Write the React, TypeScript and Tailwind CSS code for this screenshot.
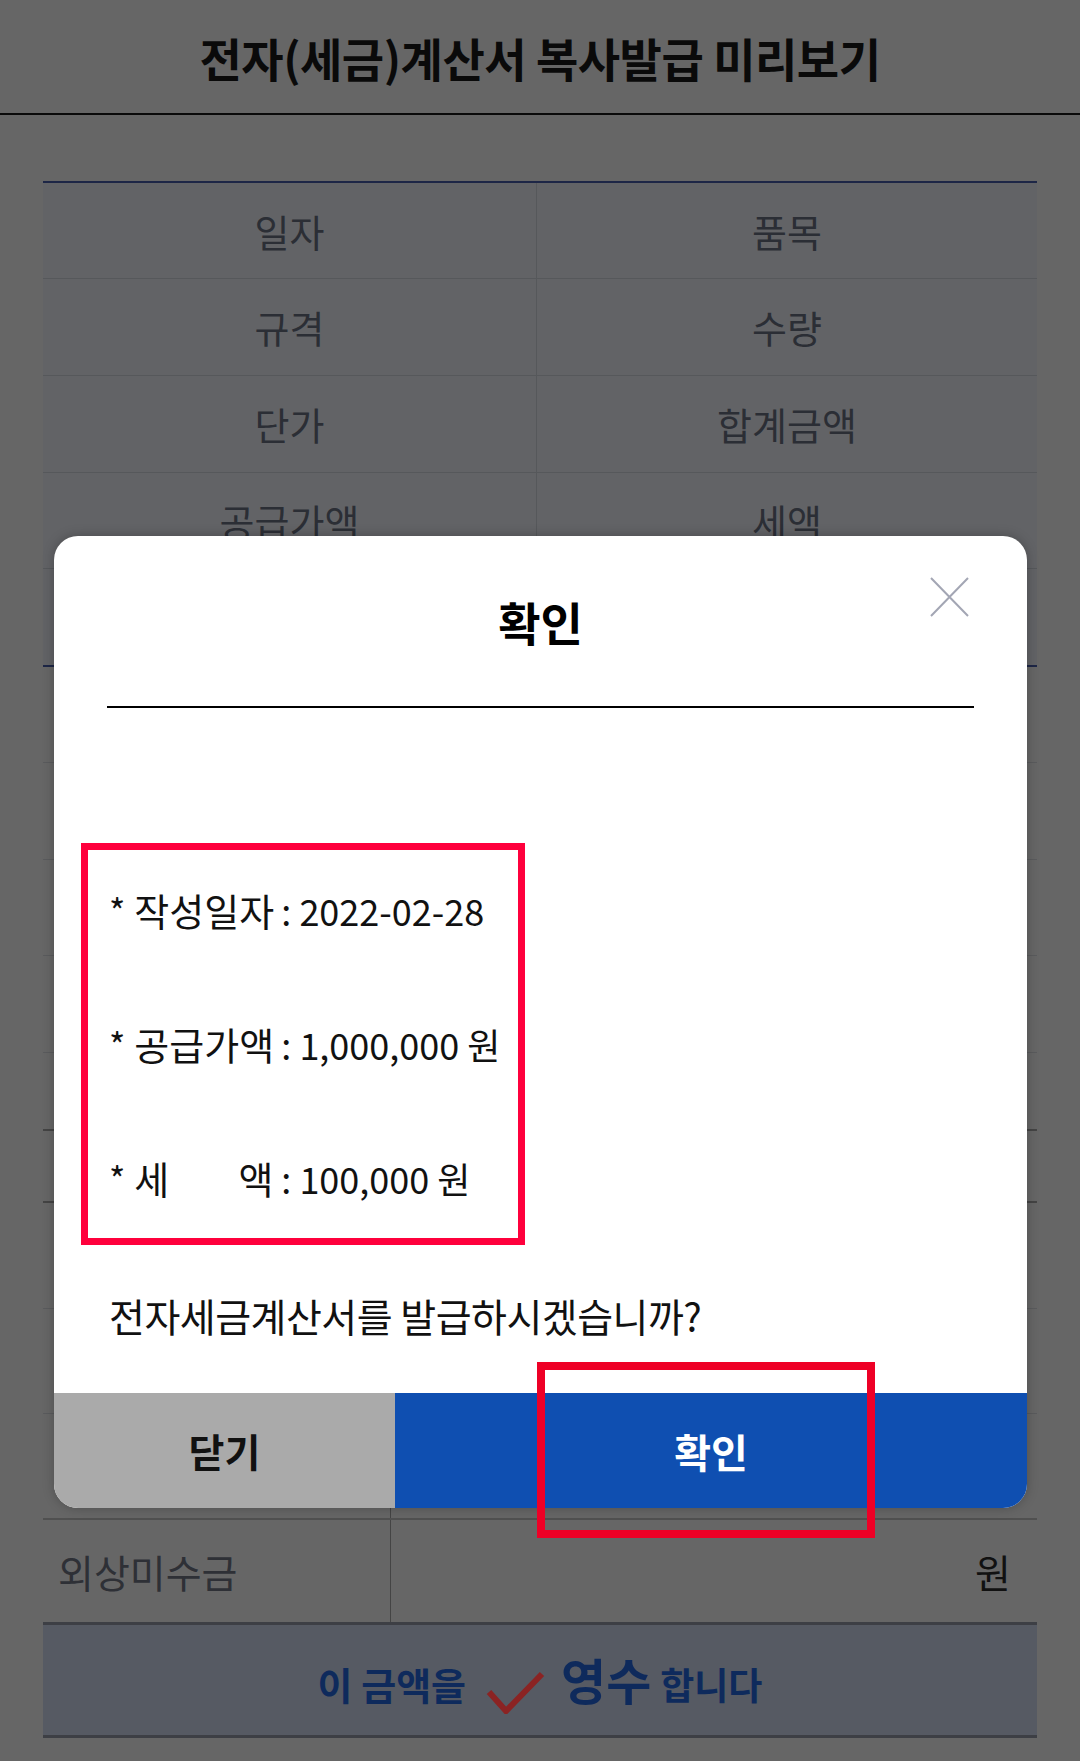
import React from "react";

const topRows: { l: string; r: string; h: string; last?: boolean }[] = [
  { l: "일자", r: "품목", h: "h-[96px]" },
  { l: "규격", r: "수량", h: "h-[97px]" },
  { l: "단가", r: "합계금액", h: "h-[97px]" },
  { l: "공급가액", r: "세액", h: "h-[96px]" },
  { l: "", r: "", h: "h-[98px]", last: true },
];

const lowerRows: { h: string; b: string }[] = [
  { h: "h-[96px]", b: "border-b border-[#5a5b5d]" },
  { h: "h-[97px]", b: "border-b border-[#5a5b5d]" },
  { h: "h-[96px]", b: "border-b border-[#5a5b5d]" },
  { h: "h-[97px]", b: "border-b border-[#5a5b5d]" },
  { h: "h-[78px]", b: "border-b-2 border-[#444444]" },
  { h: "h-[72px]", b: "border-b-2 border-[#444444]" },
  { h: "h-[106px]", b: "border-b border-[#5a5b5d]" },
  { h: "h-[105px]", b: "border-b border-[#5a5b5d]" },
  { h: "h-[106px]", b: "border-b-2 border-[#505050]" },
];

function InfoLine({ label, value }: { label: React.ReactNode; value: string }) {
  return (
    <div className="flex h-[40px] items-center whitespace-pre leading-[40px] text-[#111111]">
      <span className="text-[35px]">*</span>
      <span className="ml-[9px] inline-flex w-[139px] justify-between text-[38px]">{label}</span>
      <span className="ml-[8px] text-[36px]">:</span>
      <span className="ml-[8px] text-[36px]">{value}</span>
    </div>
  );
}

export default function App() {
  return (
    <div className="relative min-h-[1761px] w-[1080px] overflow-hidden bg-[#666666] font-['Noto_Sans_CJK_KR',sans-serif]">
      <header className="flex h-[115px] items-center justify-center border-b-2 border-[#0a0a0a]">
        <h1 className="text-[46px] font-bold leading-[50px] tracking-[-0.5px] text-[#0a0a0a]">
          전자(세금)계산서 복사발급 미리보기
        </h1>
      </header>

      <main className="mx-[43px] mt-[66px]">
        <div className="border-t-2 border-[#1d2646]">
          {topRows.map((row, i) => (
            <div
              key={i}
              className={`grid grid-cols-[494px_1fr] bg-[#626366] ${row.h} ${
                row.last ? "border-b-2 border-[#1d2646]" : "border-b border-[#56585b]"
              }`}
            >
              <div className="flex items-center justify-center border-r border-[#56585b] text-[38px] leading-[40px] text-[#2b2e35]">
                {row.l}
              </div>
              <div className="flex items-center justify-center text-[38px] leading-[40px] text-[#2b2e35]">
                {row.r}
              </div>
            </div>
          ))}
        </div>

        <div>
          {lowerRows.map((row, i) => (
            <div key={i} className={`grid grid-cols-[348px_1fr] ${row.h} ${row.b}`}>
              <div className="border-r border-[#444444]" />
              <div />
            </div>
          ))}
          <div className="grid h-[102px] grid-cols-[348px_1fr]">
            <div className="flex items-center border-r border-[#444444] pl-[15px] text-[39px] leading-[40px] text-[#2e3036]">
              외상미수금
            </div>
            <div className="flex items-center justify-end pr-[26px] text-[39px] leading-[40px] text-[#111111]">
              원
            </div>
          </div>
        </div>

        <div className="flex h-[116px] items-baseline justify-center border-y-[3px] border-[#3d3f45] bg-[#565a63] pt-[29px] font-bold text-[#0e2a5c]">
          <span className="text-[38px] leading-none">이 금액을</span>
          <svg
            className="ml-[20px] translate-y-[14px]"
            width="59"
            height="43"
            viewBox="0 0 59 43"
            fill="none"
          >
            <path d="M3 21 L20 40 L56 3" stroke="#8b2323" strokeWidth="6" strokeLinejoin="miter" />
          </svg>
          <span className="ml-[16px] text-[49px] leading-none">영수</span>
          <span className="ml-[9px] text-[37px] leading-none">합니다</span>
        </div>
      </main>

      {/* Modal */}
      <div className="absolute left-[54px] top-[536px] flex h-[972px] w-[973px] flex-col rounded-[24px] bg-white shadow-[0_0_12px_rgba(0,0,0,0.25)]">
        <button className="absolute right-[58px] top-[41px] h-[40px] w-[39px]" aria-label="닫기">
          <svg width="39" height="40" viewBox="0 0 39 40" fill="none">
            <path d="M1 1 L38 39 M38 1 L1 39" stroke="#a3a6b4" strokeWidth="2" />
          </svg>
        </button>

        <h2 className="pt-[60px] text-center text-[46px] font-bold leading-[50px] text-[#000000]">확인</h2>
        <div className="mx-[53px] mt-[60px] h-[2px] bg-[#000000]" />

        <div className="ml-[27px] mt-[135px] flex h-[402px] w-[444px] flex-col gap-[94px] border-[7px] border-[#ff003c] pl-[21px] pt-[40px]">
          <InfoLine label="작성일자" value="2022-02-28" />
          <InfoLine label="공급가액" value="1,000,000 원" />
          <InfoLine
            label={
              <>
                <span>세</span>
                <span>액</span>
              </>
            }
            value="100,000 원"
          />
        </div>

        <p className="ml-[55px] mt-[50px] text-[39px] leading-[40px] tracking-[-0.5px] text-[#111111]">
          전자세금계산서를 발급하시겠습니까?
        </p>

        <div className="mt-auto flex h-[115px] overflow-hidden rounded-b-[24px]">
          <button className="flex w-[341px] items-center justify-center bg-[#aaaaaa] text-[39px] font-bold leading-none text-[#111111]">
            닫기
          </button>
          <button className="flex flex-1 items-center justify-center bg-[#0f4fb1] text-[40px] font-bold leading-none text-white">
            확인
          </button>
        </div>

        <div className="pointer-events-none absolute left-[483px] top-[826px] h-[176px] w-[338px] border-[8px] border-[#ee0026]" />
      </div>
    </div>
  );
}
